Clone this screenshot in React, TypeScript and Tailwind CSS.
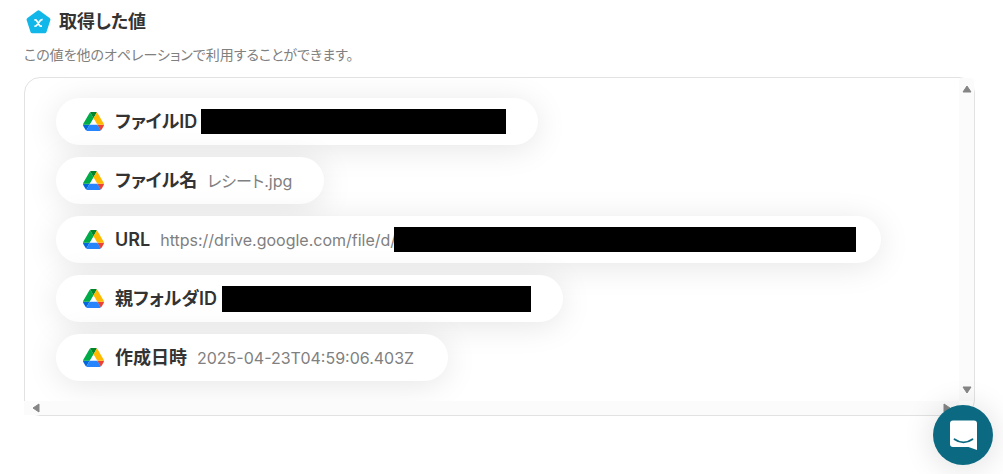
import type { ReactNode } from "react";

function DriveIcon() {
  return (
    <svg viewBox="0 0 87.3 78" className="h-[19px] w-[21px] shrink-0" aria-hidden="true">
      <path fill="#0066da" d="m6.6 66.85 3.85 6.65c.8 1.4 1.95 2.5 3.3 3.3l13.75-23.8h-27.5c0 1.55.4 3.1 1.2 4.5z" />
      <path fill="#00ac47" d="m43.65 25-13.75-23.8c-1.35.8-2.5 1.9-3.3 3.3l-25.4 44a9.06 9.06 0 0 0 -1.2 4.5h27.5z" />
      <path fill="#ea4335" d="m73.55 76.8c1.35-.8 2.5-1.9 3.3-3.3l1.6-2.75 7.65-13.25c.8-1.4 1.2-2.95 1.2-4.5h-27.5l5.85 11.5z" />
      <path fill="#00832d" d="m43.65 25 13.75-23.8c-1.35-.8-2.9-1.2-4.5-1.2h-18.5c-1.6 0-3.15.45-4.5 1.2z" />
      <path fill="#2684fc" d="m59.8 53h-32.3l-13.75 23.8c1.35.8 2.9 1.2 4.5 1.2h50.8c1.6 0 3.15-.45 4.5-1.2z" />
      <path fill="#ffba00" d="m73.4 26.5-12.7-22c-.8-1.4-1.95-2.5-3.3-3.3l-13.75 23.8 16.15 28h27.45c0-1.55-.4-3.1-1.2-4.5z" />
    </svg>
  );
}

function Pill({ label, pad, children }: { label: string; pad: string; children: ReactNode }) {
  return (
    <li
      className={`flex h-[47px] items-center rounded-full bg-white pl-[27px] shadow-[0_4px_32px_rgba(0,0,0,0.1)] ${pad}`}
    >
      <DriveIcon />
      <span className="ml-[11px] whitespace-nowrap text-[18px] font-semibold text-[#333]">{label}</span>
      {children}
    </li>
  );
}

function Value({ children }: { children: ReactNode }) {
  return <span className="ml-[10px] whitespace-nowrap pt-px text-[16px] leading-5 text-[#808080]">{children}</span>;
}

export default function App() {
  return (
    <main className="bg-white px-6 pt-2 font-['Inter','Noto_Sans_CJK_JP',sans-serif] [font-feature-settings:'palt']">
      <header>
        <div className="flex h-[27px] items-center gap-2 pl-[2px]">
          <svg viewBox="0 0 25 24" className="h-6 w-[25px]" aria-hidden="true">
            <path
              d="M12.5 2.4 22.4 9.7 18.6 21.3H6.4L2.6 9.7Z"
              fill="#12b7ea"
              stroke="#12b7ea"
              strokeWidth="4"
              strokeLinejoin="round"
            />
            <path
              d="M8.4 9.8h.8c.8 0 1.2.3 1.6 1l2.6 4.4c.4.7.8 1 1.6 1h1M16.6 9.7c-1.1-.2-1.8.2-2.6 1.2l-3 4c-.7.9-1.4 1.4-2.6 1.2"
              fill="none"
              stroke="#fff"
              strokeWidth="1.7"
            />
          </svg>
          <h1 className="text-[18px] font-semibold text-[#333]">取得した値</h1>
        </div>
        <p className="mt-2 h-[34px] text-[14px] leading-6 text-[#808080]">
          この値を他のオペレーションで利用することができます。
        </p>
      </header>

      <section
        aria-label="取得した値"
        className="mr-1 grid grid-cols-[1fr_15px] grid-rows-[1fr_14px] rounded-2xl border border-[#e2e2e2]"
      >
        <ul className="isolate flex flex-col items-start gap-3 overflow-hidden rounded-tl-2xl pt-5 pb-5 pl-[31px]">
          <Pill label="ファイルID" pad="pr-8">
            <span className="ml-1 h-[25px] w-[305px] bg-black" />
          </Pill>
          <Pill label="ファイル名" pad="pr-8">
            <Value>レシート.jpg</Value>
          </Pill>
          <Pill label="URL" pad="pr-[25px]">
            <Value>https://drive.google.com/file/d/</Value>
            <span className="-ml-0.5 h-[25px] w-[462px] bg-black" />
          </Pill>
          <Pill label="親フォルダID" pad="pr-8">
            <span className="ml-[5px] h-[26px] w-[309px] bg-black" />
          </Pill>
          <Pill label="作成日時" pad="pr-[34px]">
            <Value>2025-04-23T04:59:06.403Z</Value>
          </Pill>
        </ul>
        <div className="flex flex-col items-center justify-between rounded-t bg-[#fbfbfb] py-[7px]" aria-hidden="true">
          <svg viewBox="0 0 10 8" className="h-2 w-[10px]">
            <path d="M5 1 9 7H1Z" fill="#858585" stroke="#858585" strokeLinejoin="round" />
          </svg>
          <svg viewBox="0 0 10 8" className="h-2 w-[10px]">
            <path d="M5 7 9 1H1Z" fill="#858585" stroke="#858585" strokeLinejoin="round" />
          </svg>
        </div>
        <div className="-ml-px flex items-center justify-between bg-[#fbfbfb] pr-2 pl-2" aria-hidden="true">
          <svg viewBox="0 0 8 10" className="h-[10px] w-2">
            <path d="M1 5 7 1V9Z" fill="#858585" stroke="#858585" strokeLinejoin="round" />
          </svg>
          <svg viewBox="0 0 8 10" className="h-[10px] w-2">
            <path d="M7 5 1 1V9Z" fill="#858585" stroke="#858585" strokeLinejoin="round" />
          </svg>
        </div>
      </section>

      <button
        type="button"
        aria-label="チャットを開く"
        className="fixed right-[10px] bottom-[9px] flex size-[60px] items-center justify-center rounded-full bg-[#0b6a82] shadow-[0_2px_32px_rgba(0,0,0,0.14)]"
      >
        <svg viewBox="0 0 27 30" className="h-[30px] w-[27px]" aria-hidden="true">
          <path fill="#fff" d="M3 .5H24A3 3 0 0 1 27 3.5V30L18.5 27H3A3 3 0 0 1 0 24V3.5A3 3 0 0 1 3 .5Z" />
          <path
            d="M4.5 19.3Q8.5 22.3 13.5 22.3T22.5 19.3"
            fill="none"
            stroke="#0b6a82"
            strokeWidth="1.8"
            strokeLinecap="round"
          />
        </svg>
      </button>
    </main>
  );
}
